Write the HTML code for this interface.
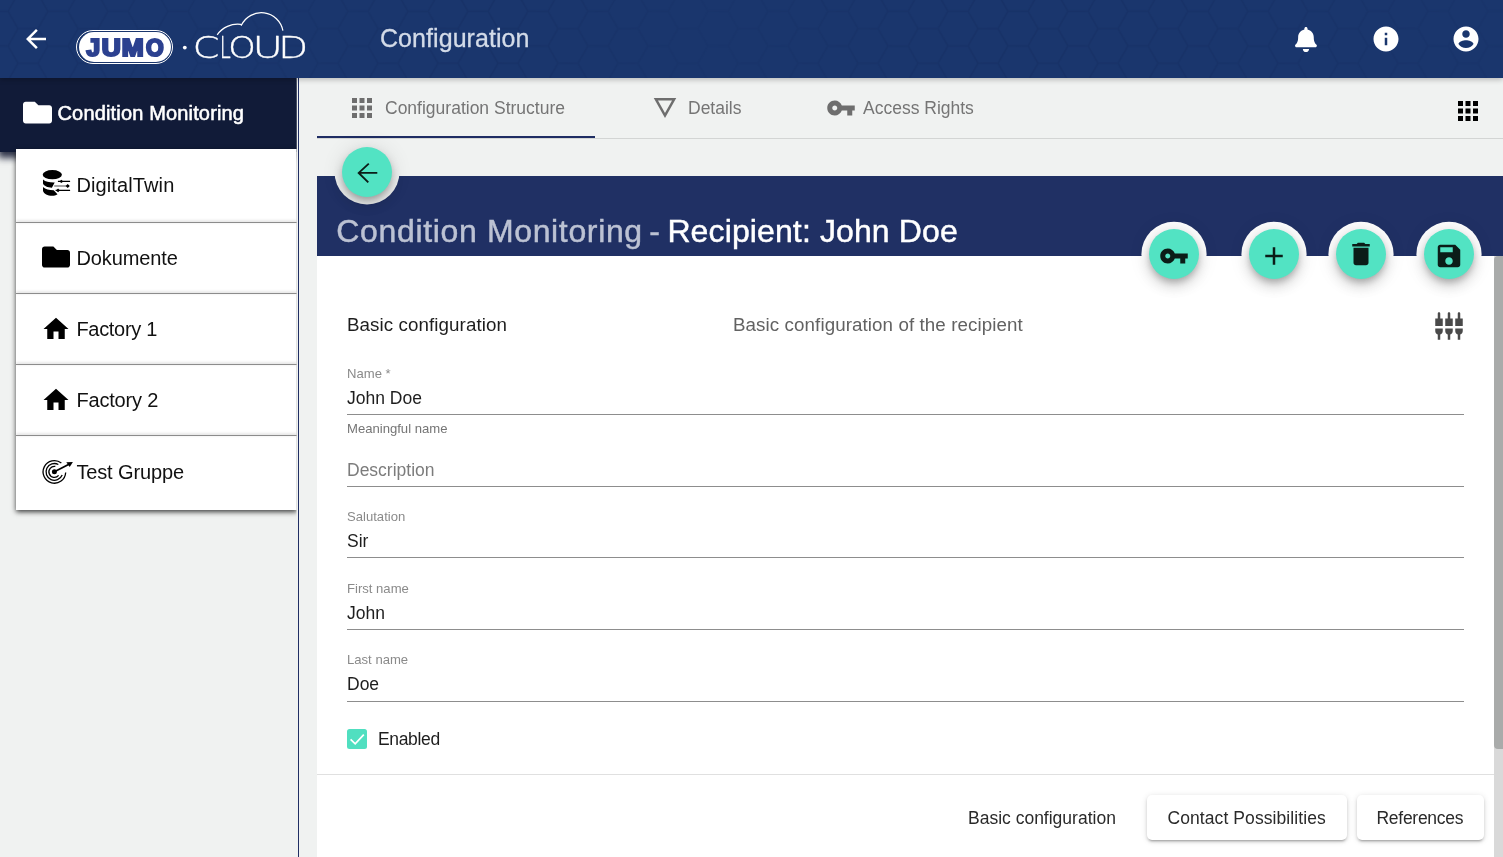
<!DOCTYPE html>
<html lang="en">
<head>
<meta charset="utf-8">
<title>Configuration</title>
<style>
*{box-sizing:border-box;margin:0;padding:0}
html,body{width:1503px;height:857px;overflow:hidden}
body{position:relative;background:#f0f2f1;font-family:"Liberation Sans",sans-serif;color:#1c1c1c}
.abs{position:absolute}
.t{position:absolute;white-space:nowrap;line-height:1}
svg{display:block;position:absolute}

/* ---------- top toolbar ---------- */
#bar{left:0;top:0;width:1503px;height:78px;background:#1a366d;overflow:hidden;box-shadow:0 2px 5px rgba(0,0,0,.22);z-index:5}
#bar .title{left:380px;top:25.700px;font-size:25px;color:#d3dbe8;-webkit-text-stroke:.3px;letter-spacing:.06px}
#pill{left:76px;top:29.700px;width:97px;height:34.400px;border-radius:17.200px;border:1px solid #fff;background:#1a366d}
#pill i{position:absolute;left:1.5px;top:1.5px;right:1.5px;bottom:1.5px;border-radius:15px;background:#fff}

/* ---------- sidebar ---------- */
#side{left:0;top:78px;width:299px;height:779px;overflow:hidden;z-index:3}
#sidehead{clip-path:inset(0 0 -16px 0);left:0;top:0;width:296.600px;height:74px;background:#111b38;box-shadow:0 4px 7px 2px rgba(12,18,42,.85);z-index:2}
#sidehead .t{left:57.500px;top:25px;font-size:20px;color:#fff;-webkit-text-stroke:.55px #fff;letter-spacing:.16px}
#sideline{left:297.600px;top:0;width:1.200px;height:779px;background:#202e63;z-index:4}
#list{clip-path:inset(-10px 0 -10px -10px);left:16px;top:71px;width:280.600px;height:361px;background:#fff;box-shadow:0 2px 5px rgba(0,0,0,.75);z-index:3}
#list .sep{position:absolute;left:0;width:281px;height:1px;background:#8c8c8c;box-shadow:0 -1px 3px rgba(0,0,0,.28)}
#list .t{left:60.400px;font-size:20px;color:#111}

#main{left:0;top:0;width:1503px;height:857px;will-change:transform}
/* ---------- tabs ---------- */
#tabline{left:317px;top:138px;width:1186px;height:1px;background:#d3d5d4}
#tabink{left:317px;top:135.5px;width:278px;height:2.5px;background:#1f2d63}
.tab{font-size:17.5px;color:#757575;top:99.500px}

/* ---------- title bar ---------- */
#titlebar{left:317px;top:176px;width:1186px;height:80px;background:#203064}
#title{left:336.300px;top:214.500px;font-size:32px;color:#fff;letter-spacing:.24px;-webkit-text-stroke:.45px}
#title span{color:#bcc2d3;letter-spacing:.65px}
#title i{font-style:normal;letter-spacing:.58px;margin-left:-3.100px}
#title b{font-weight:normal;margin-left:-2.500px;letter-spacing:.12px}

/* ---------- card ---------- */
#card{left:317px;top:256px;width:1177px;height:601px;background:#fff}
#track{left:1494px;top:256px;width:9px;height:601px;background:#d9d9d9}
#thumb{left:1494px;top:256px;width:9px;height:493px;background:#a9abaa;border-radius:4px 0 0 4px}
.fab{position:absolute;width:50px;height:50px;border-radius:50%;background:#52e3c3;box-shadow:0 4px 6px -1px rgba(0,0,0,.2),0 7.500px 12.500px rgba(0,0,0,.14),0 1px 22px rgba(0,0,0,.12),0 .3px 0 7.600px #fff;z-index:4}
.fab svg{left:9.500px;top:12px}
.fab.back{box-shadow:0 4px 6px -1px rgba(0,0,0,.2),0 7.500px 12.500px rgba(0,0,0,.14),0 1px 22px rgba(0,0,0,.12),0 0 0 7.500px #f0f2f1}
.fab.back svg{left:0;top:0}
.val{font-size:17.5px;color:#1e1e1e;left:347px}
.lab{font-size:13.1px;color:#8a8a8a;left:347px}
.ul{position:absolute;left:347px;width:1117px;height:1px;background:#8d8d8d}
.btn{position:absolute;top:795px;height:45px;border-radius:5px;background:#fff;box-shadow:0 3px 2px -2px rgba(0,0,0,.2),0 2px 3px rgba(0,0,0,.14),0 1px 6px rgba(0,0,0,.12)}
.bt{font-size:17.5px;color:#2a2a2a;top:810px}
</style>
</head>
<body>

<!-- ================= TOP TOOLBAR ================= -->
<div id="bar" class="abs">
  <svg width="1503" height="78" viewBox="0 0 1503 78" style="left:0;top:0">
    <defs>
      <pattern id="hx" width="60" height="34.640" patternUnits="userSpaceOnUse" patternTransform="translate(8 -6)">
        <path fill="none" stroke="#13285a" stroke-width="1.600" d="M0 17.320L10 0H30L40 17.320 30 34.640H10zM40 17.320H60"/>
      </pattern>
      <linearGradient id="hg" x1="0" x2="1" y1="0" y2="0">
        <stop offset="0" stop-color="#fff" stop-opacity="0.24"/><stop offset=".18" stop-color="#fff" stop-opacity="0.14"/><stop offset=".33" stop-color="#fff" stop-opacity="0.28"/><stop offset=".47" stop-color="#fff" stop-opacity="0.08"/><stop offset=".66" stop-color="#fff" stop-opacity="0.28"/><stop offset=".85" stop-color="#fff" stop-opacity="0.21"/><stop offset="1" stop-color="#fff" stop-opacity="0.10"/>
      </linearGradient>
      <mask id="hm"><rect width="1503" height="78" fill="url(#hg)"/></mask>
    </defs>
    <rect width="1503" height="78" fill="url(#hx)" mask="url(#hm)"/>
  </svg>
  <!-- back arrow -->
  <svg width="30" height="30" viewBox="0 0 24 24" style="left:20.6px;top:24px"><path fill="#fff" d="M20 11H7.83l5.59-5.59L12 4l-8 8 8 8 1.41-1.41L7.83 13H20v-2z"/></svg>
  <!-- JUMO logo -->
  <div id="pill" class="abs"><i></i></div>
  <svg width="340" height="78" viewBox="0 0 340 78" style="left:0;top:0">
    <text id="jumo" y="55.700" font-family="Liberation Sans, sans-serif" font-weight="bold" font-size="23.100" fill="#2c4190" stroke="#2c4190" stroke-width="2.200" stroke-linejoin="miter"><tspan x="86.500" textLength="13.620" lengthAdjust="spacingAndGlyphs">J</tspan><tspan x="101.870" textLength="18.970" lengthAdjust="spacingAndGlyphs">U</tspan><tspan x="121.790" textLength="21.920" lengthAdjust="spacingAndGlyphs">M</tspan><tspan x="145.950" textLength="17.610" lengthAdjust="spacingAndGlyphs">O</tspan></text>
    <circle cx="184.800" cy="47.600" r="1.900" fill="#fff"/>
    <text id="cloudtxt" y="58.300" font-family="DejaVu Sans Light, DejaVu Sans, Liberation Sans, sans-serif" font-weight="200" font-size="29.500" fill="#fff" stroke="#fff" stroke-width=".35"><tspan x="192.830" textLength="26.630" lengthAdjust="spacingAndGlyphs">C</tspan><tspan x="219.680" textLength="11.040" lengthAdjust="spacingAndGlyphs">L</tspan><tspan x="228.150" textLength="27.500" lengthAdjust="spacingAndGlyphs">O</tspan><tspan x="252.460" textLength="30.380" lengthAdjust="spacingAndGlyphs">U</tspan><tspan x="278.190" textLength="29.850" lengthAdjust="spacingAndGlyphs">D</tspan></text>
    <path fill="none" stroke="#fff" stroke-width="1.250" d="M217.200 34.800A25 25 0 0 1 240.600 24.400l.9.700A22 22 0 0 1 282.900 30.600"/>
  </svg>
  <div class="t title">Configuration</div>
  <!-- bell -->
  <svg width="21.9" height="25" viewBox="0 0 448 512" style="left:1295px;top:27px"><path fill="#fff" d="M224 512c35.32 0 63.970-28.650 63.970-64H160.030c0 35.350 28.650 64 63.970 64zm215.390-149.710c-19.320-20.760-55.470-51.990-55.470-154.290 0-77.700-54.480-139.900-127.940-155.160V32c0-17.670-14.320-32-31.980-32s-31.980 14.330-31.980 32v20.840C118.560 68.100 64.080 130.300 64.080 208c0 102.300-36.150 133.530-55.470 154.290-6 6.450-8.660 14.160-8.610 21.710.11 16.400 12.980 32 32.100 32h383.800c19.120 0 32-15.600 32.100-32 .05-7.550-2.610-15.270-8.610-21.710z"/></svg>
  <!-- info -->
  <svg width="30" height="30" viewBox="0 0 24 24" style="left:1371px;top:24px"><path fill="#fff" d="M12 2C6.480 2 2 6.480 2 12s4.480 10 10 10 10-4.480 10-10S17.520 2 12 2zm1 15h-2v-6h2v6zm0-8h-2V7h2v2z"/></svg>
  <!-- account -->
  <svg width="30" height="30" viewBox="0 0 24 24" style="left:1451px;top:24px"><path fill="#fff" d="M12 2C6.480 2 2 6.480 2 12s4.480 10 10 10 10-4.480 10-10S17.520 2 12 2zm0 3c1.660 0 3 1.340 3 3s-1.340 3-3 3-3-1.340-3-3 1.340-3 3-3zm0 14.200c-2.500 0-4.710-1.280-6-3.220.03-1.990 4-3.080 6-3.080 1.990 0 5.970 1.090 6 3.080-1.290 1.940-3.500 3.220-6 3.220z"/></svg>
</div>

<!-- ================= SIDEBAR ================= -->
<div id="side" class="abs">
<div id="sidehead" class="abs">
  <svg width="29" height="29" viewBox="0 0 512 512" style="left:23px;top:20px"><path fill="#fff" d="M464 128H272l-64-64H48C21.490 64 0 85.490 0 112v288c0 26.510 21.490 48 48 48h416c26.510 0 48-21.490 48-48V176c0-26.510-21.490-48-48-48z"/></svg>
  <div class="t">Condition Monitoring</div>
</div>

<div id="list" class="abs">
  <div class="sep" style="top:73px"></div>
  <div class="sep" style="top:144px"></div>
  <div class="sep" style="top:215px"></div>
  <div class="sep" style="top:286px"></div>

  <!-- DigitalTwin icon: database + arrows -->
  <svg width="44" height="40" viewBox="0 0 44 40" style="left:20px;top:13px">
    <ellipse cx="16.300" cy="12.700" rx="9.600" ry="4.600" fill="#000"/>
    <path fill="#000" d="M7 17.500C9.500 19.800 13.500 20.600 18.700 20.500L15.900 25.700C11.500 25.500 8 24 7 21.500z"/>
    <path fill="#000" d="M7 25C9.500 27.300 13 28.200 17.700 28.200L21.500 32.200C19.800 33.300 18 33.800 16.300 33.800 11.500 33.600 8 32 7 29z"/>
    <path stroke="#000" stroke-width="1.100" d="M21.900 19.400H34.100M19.600 28.400H34.100"/>
    <path stroke="#8a8a8a" stroke-width="1.700" d="M18.200 24H30.500"/>
    <path fill="#000" d="M23.300 19.400l2.100-1.700 1.900 1.700-1.900 1.700zM29.600 24l2.100-2 2.100 2-2.100 2zM19.900 28.400l2.200-1.800 1.800 1.800-1.800 1.800z"/>
  </svg>
  <div class="t" style="top:26px;letter-spacing:.12px">DigitalTwin</div>

  <svg width="28" height="28" viewBox="0 0 512 512" style="left:26px;top:94px"><path fill="#000" d="M464 128H272l-64-64H48C21.490 64 0 85.490 0 112v288c0 26.510 21.490 48 48 48h416c26.510 0 48-21.490 48-48V176c0-26.510-21.490-48-48-48z"/></svg>
  <div class="t" style="top:99px;letter-spacing:-.1px">Dokumente</div>

  <svg width="30" height="30" viewBox="0 0 24 24" style="left:25px;top:165px"><path fill="#000" d="M10 20v-6h4v6h5v-8h3L12 3 2 12h3v8z"/></svg>
  <div class="t" style="top:170px;letter-spacing:-.3px">Factory 1</div>

  <svg width="30" height="30" viewBox="0 0 24 24" style="left:25px;top:236px"><path fill="#000" d="M10 20v-6h4v6h5v-8h3L12 3 2 12h3v8z"/></svg>
  <div class="t" style="top:241px;letter-spacing:-.17px">Factory 2</div>

  <!-- bullseye arrow -->
  <svg width="44" height="40" viewBox="0 0 44 40" style="left:20px;top:301px">
    <g fill="none" stroke="#000" stroke-width="1.300">
      <path d="M25.360 13A11.300 11.300 0 1 0 29.680 22.490"/>
      <path d="M22.340 14.480A8.400 8.400 0 1 0 26.190 25.050"/>
      <path d="M19.360 16.480A5.500 5.500 0 1 0 22.610 25.440"/>
    </g>
    <circle cx="18.400" cy="21.800" r="2.500" fill="#000"/>
    <path stroke="#000" stroke-width="1.700" d="M18.400 21.800L33 14.300"/>
    <path fill="#000" d="M36.900 12L30.300 12.300 33.700 16.900z"/>
  </svg>
  <div class="t" style="top:312.500px;letter-spacing:-.13px">Test Gruppe</div>
</div>

<div id="sideline" class="abs"></div>
</div>

<!-- ================= TABS ================= -->
<div id="main" class="abs">
<div id="tabline" class="abs"></div>
<div id="tabink" class="abs"></div>
<svg width="30" height="30" viewBox="0 0 24 24" style="left:347px;top:93px"><path fill="#6e6e6e" d="M4 8h4V4H4v4zm6 12h4v-4h-4v4zm-6 0h4v-4H4v4zm0-6h4v-4H4v4zm6 0h4v-4h-4v4zm6-10v4h4V4h-4zm-6 4h4V4h-4v4zm6 6h4v-4h-4v4zm0 6h4v-4h-4v4z"/></svg>
<div class="t tab" style="left:385px">Configuration Structure</div>
<svg width="30" height="30" viewBox="0 0 24 24" style="left:650px;top:93px"><path fill="#6e6e6e" d="M3 4l9 16 9-16H3zm3.380 2h11.250L12 16 6.380 6z"/></svg>
<div class="t tab" style="left:688px">Details</div>
<svg width="30" height="30" viewBox="0 0 24 24" style="left:825.500px;top:93px"><path fill="#6e6e6e" d="M12.650 10C11.830 7.670 9.610 6 7 6c-3.310 0-6 2.690-6 6s2.690 6 6 6c2.610 0 4.830-1.670 5.650-4H17v4h4v-4h2v-4H12.650zM7 14c-1.100 0-2-.9-2-2s.9-2 2-2 2 .9 2 2-.9 2-2 2z"/></svg>
<div class="t tab" style="left:863px">Access Rights</div>
<svg width="30" height="30" viewBox="0 0 24 24" style="left:1453px;top:96px"><path fill="#000" d="M4 8h4V4H4v4zm6 12h4v-4h-4v4zm-6 0h4v-4H4v4zm0-6h4v-4H4v4zm6 0h4v-4h-4v4zm6-10v4h4V4h-4zm-6 4h4V4h-4v4zm6 6h4v-4h-4v4zm0 6h4v-4h-4v4z"/></svg>

<!-- ================= TITLE BAR ================= -->
<div id="titlebar" class="abs"></div>
<div id="title" class="t"><span>Condition Monitoring<i> - </i></span><b>Recipient: John Doe</b></div>

<!-- ================= CARD ================= -->
<div id="card" class="abs"></div>
<div id="track" class="abs"></div>
<div id="thumb" class="abs"></div>

<div class="fab back" style="left:342px;top:147px"><svg width="50" height="50" viewBox="0 0 50 50"><path fill="none" stroke="#0b1d18" stroke-width="1.900" d="M35.300 25.900H16.900M26.800 16.600L16.700 25.900 26.300 35.400"/></svg></div>
<div class="fab" style="left:1149px;top:229px"><svg width="30" height="30" viewBox="0 0 24 24"><path fill="#0b1d18" d="M12.650 10C11.830 7.670 9.610 6 7 6c-3.310 0-6 2.690-6 6s2.690 6 6 6c2.610 0 4.830-1.670 5.650-4H17v4h4v-4h2v-4H12.650zM7 14c-1.100 0-2-.9-2-2s.9-2 2-2 2 .9 2 2-.9 2-2 2z"/></svg></div>
<div class="fab" style="left:1249px;top:229px"><svg width="30" height="30" viewBox="0 0 24 24"><path fill="#0b1d18" d="M19 13h-6v6h-2v-6H5v-2h6V5h2v6h6v2z"/></svg></div>
<div class="fab" style="left:1336px;top:229px"><svg width="30" height="30" viewBox="0 0 24 24" style="top:10px"><path fill="#0b1d18" d="M6 19c0 1.100.9 2 2 2h8c1.100 0 2-.9 2-2V7H6v12zM19 4h-3.500l-1-1h-5l-1 1H5v2h14V4z"/></svg></div>
<div class="fab" style="left:1424px;top:229px"><svg width="30" height="30" viewBox="0 0 24 24"><path fill="#0b1d18" d="M17 3H5c-1.110 0-2 .9-2 2v14c0 1.100.89 2 2 2h14c1.100 0 2-.9 2-2V7l-4-4zm-5 16c-1.660 0-3-1.340-3-3s1.340-3 3-3 3 1.340 3 3-1.340 3-3 3zm3-10H5V5h10v4z"/></svg></div>

<div class="t" style="left:347px;top:316px;font-size:18.75px;color:#1e1e1e;letter-spacing:.08px">Basic configuration</div>
<div class="t" style="left:733px;top:316px;font-size:18.75px;color:#626262;letter-spacing:.09px">Basic configuration of the recipient</div>
<!-- tuning icon -->
<svg width="30" height="30" viewBox="0 0 24 24" style="left:1433.850px;top:310.900px"><path fill="#4a4a4a" d="M5 2c0-.55-.45-1-1-1s-1 .45-1 1v4H1v6h6V6H5V2zm4 14c0 1.300.840 2.400 2 2.820V23h2v-4.180c1.160-.41 2-1.510 2-2.820v-2H9v2zm-8 0c0 1.300.840 2.400 2 2.820V23h2v-4.180C6.160 18.400 7 17.300 7 16v-2H1v2zM21 6V2c0-.55-.45-1-1-1s-1 .45-1 1v4h-2v6h6V6h-2zm-8-4c0-.55-.45-1-1-1s-1 .45-1 1v4H9v6h6V6h-2V2zm4 14c0 1.300.840 2.400 2 2.820V23h2v-4.180c1.160-.41 2-1.510 2-2.820v-2h-6v2z"/></svg>

<div class="t lab" style="top:367px">Name *</div>
<div class="t val" style="top:390px">John Doe</div>
<div class="ul" style="top:414px"></div>
<div class="t lab" style="top:422px;color:#757575">Meaningful name</div>

<div class="t val" style="top:462px;color:#7c7c7c">Description</div>
<div class="ul" style="top:486px"></div>

<div class="t lab" style="top:510px">Salutation</div>
<div class="t val" style="top:533px">Sir</div>
<div class="ul" style="top:557px"></div>

<div class="t lab" style="top:582px">First name</div>
<div class="t val" style="top:605px">John</div>
<div class="ul" style="top:629px"></div>

<div class="t lab" style="top:653px">Last name</div>
<div class="t val" style="top:676px">Doe</div>
<div class="ul" style="top:701px"></div>

<div class="abs" style="left:347px;top:729px;width:20px;height:20px;border-radius:2.5px;background:#50dfc0">
  <svg width="20" height="20" viewBox="0 0 20 20" style="left:0;top:0"><path fill="none" stroke="#fff" stroke-width="1.700" d="M3.600 10.300l4.600 4.600 8.600-9.200"/></svg>
</div>
<div class="t val" style="left:378px;top:731px;letter-spacing:-.35px">Enabled</div>

<div class="abs" style="left:317px;top:774px;width:1177px;height:1px;background:#e0e0e0"></div>

<div class="t bt" style="left:968px">Basic configuration</div>
<div class="btn" style="left:1147px;width:200px"></div>
<div class="t bt" style="left:1167.500px;letter-spacing:.08px">Contact Possibilities</div>
<div class="btn" style="left:1357px;width:127px"></div>
<div class="t bt" style="left:1376.500px;letter-spacing:-.28px">References</div>

</div>
</body>
</html>
